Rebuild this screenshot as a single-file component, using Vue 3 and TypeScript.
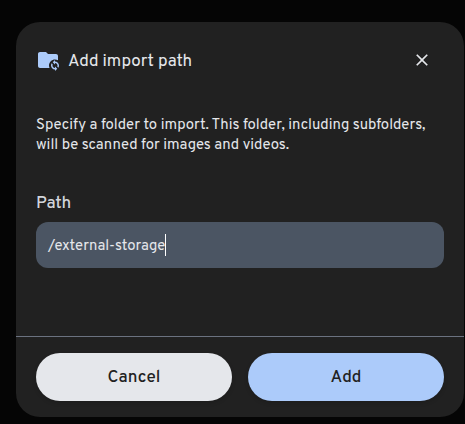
<script setup lang="ts">
import { onMounted, ref } from 'vue'

const path = ref<string>('/external-storage')
const field = ref<HTMLElement | null>(null)

onMounted(() => field.value?.focus())
</script>

<template>
  <main class="backdrop">
    <section class="modal" role="dialog" aria-labelledby="title">
      <header class="header">
        <svg class="folder" viewBox="0 0 24 24" aria-hidden="true">
          <path d="M13 17.5C13 18.4 13.2 19.25 13.55 20H4C2.9 20 2 19.1 2 18V6C2 4.9 2.9 4 4 4H10L12 6H20C21.1 6 22 6.9 22 8V12.3C21.1 11.8 20.1 11.5 19 11.5C15.7 11.5 13 14.2 13 17.5Z" />
          <path d="M19 12V13.5C21.21 13.5 23 15.29 23 17.5C23 18.32 22.75 19.08 22.33 19.71L21.24 18.62C21.41 18.28 21.5 17.9 21.5 17.5C21.5 16.12 20.38 15 19 15V16.5L16.75 14.25L19 12M19 23V21.5C16.79 21.5 15 19.71 15 17.5C15 16.68 15.25 15.92 15.67 15.29L16.76 16.38C16.59 16.72 16.5 17.1 16.5 17.5C16.5 18.88 17.62 20 19 20V18.5L21.25 20.75L19 23Z" />
        </svg>
        <h1 id="title" class="title">Add import path</h1>
        <button class="close" type="button" aria-label="Close">
          <svg viewBox="0 0 24 24" aria-hidden="true">
            <path d="M19 6.41L17.59 5L12 10.59L6.41 5L5 6.41L10.59 12L5 17.59L6.41 19L12 13.41L17.59 19L19 17.59L13.41 12L19 6.41Z" />
          </svg>
        </button>
      </header>
      <div class="body">
        <p class="description">
          Specify a folder to import. This folder, including subfolders,<br />
          will be scanned for images and videos.
        </p>
        <div class="label">Path</div>
        <div ref="field" class="field" tabindex="0" role="textbox">
          <span class="value">{{ path }}</span><span class="caret"></span>
        </div>
      </div>
      <footer class="footer">
        <button class="action cancel" type="button">Cancel</button>
        <button class="action add" type="button">Add</button>
      </footer>
    </section>
  </main>
</template>

<style>
body {
  background: #050505;
  overflow: hidden;
}
</style>

<style scoped>
.backdrop {
  box-sizing: border-box;
  width: 465px;
  height: 424px;
  padding: 22px 1px 7px 16px;
  background: #050505;
  font-family: Overpass, Roboto, "Liberation Sans", sans-serif;
  color: #e5e7eb;
}
.modal {
  display: flex;
  flex-direction: column;
  height: 395px;
  border-radius: 24px;
  background: #212121;
  overflow: hidden;
}
.header {
  display: flex;
  align-items: center;
  height: 76px;
  padding: 0 20px;
  box-sizing: border-box;
}
.folder {
  width: 24px;
  height: 24px;
  fill: #accbfa;
}
.title {
  flex: 1;
  margin: 0 0 0 8px;
  padding-top: 3px;
  font-size: 17px;
  font-weight: 400;
  line-height: 24px;
}
.close {
  display: flex;
  padding: 12px;
  border: 0;
  background: none;
}
.close svg {
  width: 20px;
  height: 20px;
  fill: #e5e7eb;
}
.body {
  flex: 1;
  padding: 18px 20px 0;
}
.description {
  margin: 0;
  font-size: 14.875px;
  line-height: 20px;
  white-space: nowrap;
}
.label {
  margin-top: 36px;
  font-size: 17px;
  font-weight: 500;
  line-height: 24px;
  color: #d1d5db;
}
.field {
  display: flex;
  align-items: center;
  box-sizing: border-box;
  height: 46px;
  margin-top: 6px;
  padding: 0 12px;
  border-radius: 12px;
  background: #4b5563;
  font-size: 14.875px;
  outline: none;
}
.value {
  padding-top: 2px;
}
.caret {
  width: 1px;
  height: 22px;
  background: #fff;
}
.footer {
  display: flex;
  gap: 16px;
  padding: 16px 20px;
  border-top: 1px solid #6b7280;
}
.action {
  flex: 1;
  height: 48px;
  padding: 2px 0 0;
  border: 0;
  border-radius: 24px;
  font: 500 17px/24px Overpass, Roboto, "Liberation Sans", sans-serif;
  color: #212121;
  box-shadow: 0 2px 4px rgba(0, 0, 0, 0.15);
}
.cancel {
  background: #e5e7eb;
}
.add {
  background: #accbfa;
}
</style>
